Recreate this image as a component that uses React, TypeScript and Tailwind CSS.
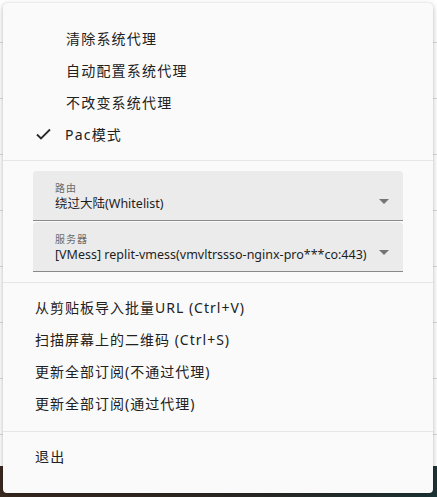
import React from "react";

const font = { fontFamily: '"Noto Sans", "Noto Sans CJK SC", sans-serif' };

function Arrow() {
  return (
    <svg width="10" height="5" viewBox="0 0 10 5" className="shrink-0">
      <path d="M0 0 L10 0 L5 5 Z" fill="#757575" />
    </svg>
  );
}

function Select({ label, value }: { label: string; value: string }) {
  return (
    <div className="h-[50px] bg-[#ebebeb] rounded-t-[4px] border-b border-[#8a8a8a] pl-[22px] pr-[14px] flex items-center">
      <div className="flex-1 min-w-0 flex flex-col pt-[2px]">
        <span className="text-[10px] leading-[14px] text-[#6b6b6b] tracking-[1px]">{label}</span>
        <span className="text-[12.5px] leading-[17px] text-[#1e1e1e] whitespace-nowrap">{value}</span>
      </div>
      <div className="pt-[12px] pl-[8px]">
        <Arrow />
      </div>
    </div>
  );
}

export default function App() {
  const rows = [43, 56, 56, 56, 56, 56, 56, 56];
  return (
    <div className="relative w-[437px] h-[497px] overflow-hidden bg-white" style={font}>
      {/* background page */}
      <div className="flex flex-col h-full">
        {rows.map((h, i) => (
          <div key={i} className="border-b border-[#dcdcdc] shrink-0" style={{ height: h }} />
        ))}
        <div className="flex-1" />
      </div>
      <div className="absolute left-0 right-0 bottom-0 h-[31px] bg-gradient-to-r from-[#3b2a21] via-[#2f2a26] to-[#1d3637]" />

      {/* menu */}
      <div className="absolute left-[3px] top-[3px] w-[430px] h-[490px] bg-[#fafafa] rounded-[4px] shadow-[0_2px_6px_rgba(0,0,0,0.25),0_0_1px_rgba(0,0,0,0.2)] flex flex-col pt-[19px] text-[14px] text-[#212121]">
        {["清除系统代理", "自动配置系统代理", "不改变系统代理"].map((t) => (
          <div key={t} className="h-[32px] flex items-center pl-[63px] tracking-[1.2px]">
            {t}
          </div>
        ))}
        <div className="h-[32px] flex items-center pl-[33px] tracking-[1.2px]">
          <svg width="15" height="12" viewBox="0 0 15 12" className="mr-[14px]">
            <path d="M1 6.5 L5 10.5 L14 1.5" stroke="#2a2a2a" strokeWidth="1.8" fill="none" />
          </svg>
          Pac模式
        </div>
        <div className="mt-[10px] border-t border-[#e6e6e6]" />
        <div className="mt-[10px] mx-[30px] flex flex-col gap-[1px]">
          <Select label="路由" value="绕过大陆(Whitelist)" />
          <Select label="服务器" value="[VMess] replit-vmess(vmvltrssso-nginx-pro***co:443)" />
        </div>
        <div className="mt-[10px] border-t border-[#e6e6e6]" />
        <div className="mt-[8px]">
          {[
            "从剪贴板导入批量URL (Ctrl+V)",
            "扫描屏幕上的二维码 (Ctrl+S)",
            "更新全部订阅(不通过代理)",
            "更新全部订阅(通过代理)",
          ].map((t) => (
            <div key={t} className="h-[32px] flex items-center pl-[32px] tracking-[1px] whitespace-nowrap">
              {t}
            </div>
          ))}
        </div>
        <div className="mt-[12px] border-t border-[#e6e6e6]" />
        <div className="mt-[8px] h-[32px] flex items-center pl-[32px] tracking-[1.2px]">退出</div>
      </div>
    </div>
  );
}
